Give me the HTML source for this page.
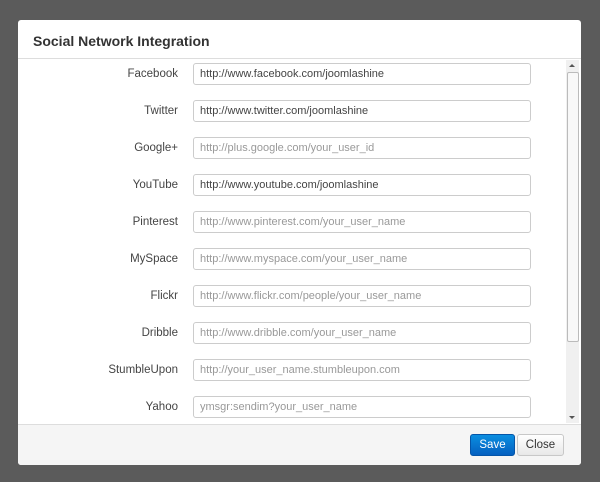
<!DOCTYPE html><html><head><style>
body{margin:0;width:600px;height:482px;background:#5b5b5b;font-family:"Liberation Sans",sans-serif;position:relative;overflow:hidden}
.m{position:absolute;left:18px;top:20px;width:563px;height:445px;background:#fff;border-radius:3px;overflow:hidden}
.h{height:38px;border-bottom:1px solid #ddd;font-weight:bold;font-size:14px;color:#333;line-height:42px;padding-left:15px}
.b{position:absolute;top:39px;left:0;width:563px;height:365px;overflow:hidden}
.r{position:absolute;left:0;width:548px;height:22px}
.r label{position:absolute;right:388px;top:5px;font-size:11.5px;color:#444}
.r div{position:absolute;left:175px;width:330px;height:20px;border:1px solid #ccc;border-radius:3px;font-size:11px;line-height:21px;padding-left:6px;color:#444}
.r div.p{color:#999}
.sb{position:absolute;right:2px;top:40px;width:13px;height:363px;background:#f0f0f0}
.th{position:absolute;left:1px;top:12px;width:10px;height:268px;background:#f8f8f8;border:1px solid #bbb;border-radius:2px}
.ar{position:absolute;left:3px;width:0;height:0;border-left:3px solid transparent;border-right:3px solid transparent}
.f{position:absolute;left:0;top:404px;width:563px;height:41px;background:#f5f5f5;border-top:1px solid #ddd}
.btn{position:absolute;top:9px;height:20px;border-radius:3px;font-size:11.5px;line-height:20px;text-align:center}
</style></head><body>
<div class="m"><div class="h">Social Network Integration</div>
<div class="b">
<div class="r" style="top:4px"><label>Facebook</label><div>http://www.facebook.com/joomlashine</div></div>
<div class="r" style="top:41px"><label>Twitter</label><div>http://www.twitter.com/joomlashine</div></div>
<div class="r" style="top:78px"><label>Google+</label><div class="p">http://plus.google.com/your_user_id</div></div>
<div class="r" style="top:115px"><label>YouTube</label><div>http://www.youtube.com/joomlashine</div></div>
<div class="r" style="top:152px"><label>Pinterest</label><div class="p">http://www.pinterest.com/your_user_name</div></div>
<div class="r" style="top:189px"><label>MySpace</label><div class="p">http://www.myspace.com/your_user_name</div></div>
<div class="r" style="top:226px"><label>Flickr</label><div class="p">http://www.flickr.com/people/your_user_name</div></div>
<div class="r" style="top:263px"><label>Dribble</label><div class="p">http://www.dribble.com/your_user_name</div></div>
<div class="r" style="top:300px"><label>StumbleUpon</label><div class="p">http://your_user_name.stumbleupon.com</div></div>
<div class="r" style="top:337px"><label>Yahoo</label><div class="p">ymsgr:sendim?your_user_name</div></div>
</div>
<div class="sb"><div class="ar" style="top:4px;border-bottom:3px solid #555"></div><div class="th"></div><div class="ar" style="top:356px;border-top:3px solid #555"></div></div>
<div class="f">
<div class="btn" style="left:452px;width:43px;background:linear-gradient(#0a8ee0,#0560c0);color:#fff;border:1px solid #0555a8">Save</div>
<div class="btn" style="left:499px;width:45px;background:linear-gradient(#fff,#e8e8e8);color:#333;border:1px solid #c8c8c8">Close</div>
</div></div>
</body></html>
